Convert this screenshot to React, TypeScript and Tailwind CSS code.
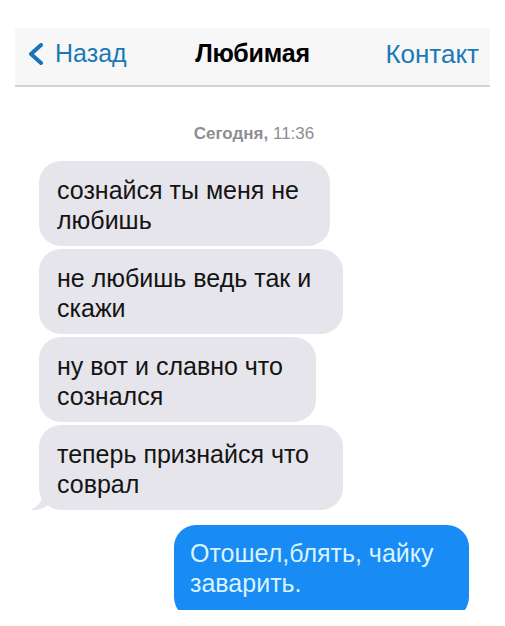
import React from "react";

type Incoming = { id: number; lines: string[]; width: string; tail?: boolean };

const incoming: Incoming[] = [
  { id: 1, lines: ["сознайся ты меня не", "любишь"], width: "w-[291px]" },
  { id: 2, lines: ["не любишь ведь так и", "скажи"], width: "w-[304px]" },
  { id: 3, lines: ["ну вот и славно что", "сознался"], width: "w-[277px]" },
  { id: 4, lines: ["теперь признайся что", "соврал"], width: "w-[304px]", tail: true },
];

function GrayTail() {
  return (
    <svg
      className="absolute left-[-10px] bottom-0"
      width="20"
      height="22"
      viewBox="0 0 20 22"
    >
      <path d="M15 0 C15 10 11 18 1 22 C9 22.5 14 21 19 17 L19 0 Z" fill="#e6e5eb" />
    </svg>
  );
}

function BlueTail() {
  return (
    <svg
      className="absolute right-[-7px] bottom-0"
      width="20"
      height="22"
      viewBox="0 0 20 22"
    >
      <path d="M5 0 C5 10 9 18 19 22 C11 22.5 6 21 1 17 L1 0 Z" fill="#188bf5" />
    </svg>
  );
}

export default function App() {
  return (
    <div className="w-[505px] h-[626px] bg-white font-['Liberation_Sans',Arial,sans-serif]">
      <div className="mx-[15px] pt-[28px]">
        <div className="h-[582px] overflow-hidden flex flex-col">
          {/* Navigation bar */}
          <div className="h-[59px] shrink-0 bg-[#f7f7f8] border-b-2 border-[#d4d4d8] grid grid-cols-[1fr_auto_1fr] items-center pb-[6px]">
            <button className="flex items-center gap-[10px] pl-[12px] text-[#1b79b6] text-[25px] leading-none">
              <svg width="18" height="22" viewBox="0 0 18 22">
                <path
                  d="M14 2 L4 11 L14 20"
                  fill="none"
                  stroke="#1876b8"
                  strokeWidth="4"
                  strokeLinecap="round"
                  strokeLinejoin="round"
                />
              </svg>
              <span>Назад</span>
            </button>
            <h1 className="text-[25px] leading-none font-bold text-black tracking-[-0.2px]">Любимая</h1>
            <button className="justify-self-end pr-[11px] text-[#1b79b6] text-[26px] leading-none">
              Контакт
            </button>
          </div>

          {/* Thread */}
          <div className="flex flex-col px-[24px]">
            <p className="mt-[37px] text-center text-[17px] leading-[20px] text-[#8d8d92] pl-[3px]">
              <span className="font-semibold">Сегодня,</span> 11:36
            </p>

            <div className="mt-[17px] flex flex-col gap-[3px]">
              {incoming.map((msg) => (
                <div
                  key={msg.id}
                  className={`relative ${msg.width} h-[85px] rounded-[22px] bg-[#e6e5eb] pl-[18px] pt-[14px] text-[25px] leading-[30px] text-[#141414]`}
                >
                  {msg.lines.map((line) => (
                    <div key={line}>{line}</div>
                  ))}
                  {msg.tail && <GrayTail />}
                </div>
              ))}
            </div>

            <div className="self-end mr-[-3px] mt-[15px] relative w-[295px] h-[94px] rounded-[22px] bg-[#188bf5] pl-[16px] pt-[13px] text-[25px] leading-[30px] text-[#d8f4ff]">
              <div>Отошел,блять, чайку</div>
              <div>заварить.</div>
              <BlueTail />
            </div>
          </div>
        </div>
      </div>
    </div>
  );
}
